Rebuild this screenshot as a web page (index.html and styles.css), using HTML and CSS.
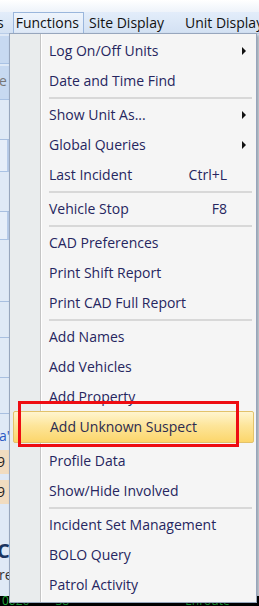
FILE: index.html
```html
<!DOCTYPE html>
<html lang="en">

<head>
    <meta charset="UTF-8" />
    <meta name="viewport" content="width=device-width, initial-scale=1.0" />
    <title>Functions menu</title>
    <link rel="stylesheet" href="styles.css">
</head>

<body>
    <div class="app">
        <div class="title-strip"></div>
        <div class="menubar">
            <span class="menubar-item cut">s</span>
            <span class="menubar-item open">Functions</span>
            <span class="menubar-item site">Site Display</span>
            <span class="menubar-item">Unit Display</span>
        </div>
        <div class="workspace">
            <div class="side">
                <div class="side-box b1"></div>
                <div class="side-box b2">e</div>
                <div class="side-block h40"></div>
                <div class="side-box small"></div>
                <div class="side-block h40"></div>
                <div class="side-box small2"></div>
                <div class="side-block h62"></div>
                <div class="side-block h36"></div>
                <div class="side-block h40"></div>
                <div class="side-block h36"></div>
                <div class="side-row link">a'</div>
                <div class="side-row tan">9</div>
                <div class="side-row tan second">9</div>
                <div class="side-row big">C</div>
                <div class="side-row">re</div>
            </div>
            <div class="status">
                <span>0026</span>
                <span>38</span>
                <span>Enroute</span>
            </div>
        </div>

        <div class="dropdown">
            <div class="gutter"></div>
            <ul class="menu">
                <li>Log On/Off Units<span class="arrow"></span></li>
                <li>Date and Time Find</li>
                <li class="sep"></li>
                <li>Show Unit As...<span class="arrow"></span></li>
                <li>Global Queries<span class="arrow"></span></li>
                <li>Last Incident<span class="key">Ctrl+L</span></li>
                <li class="sep"></li>
                <li>Vehicle Stop<span class="key">F8</span></li>
                <li class="sep"></li>
                <li>CAD Preferences</li>
                <li>Print Shift Report</li>
                <li>Print CAD Full Report</li>
                <li class="sep"></li>
                <li>Add Names</li>
                <li>Add Vehicles</li>
                <li>Add Property</li>
                <li class="hover">Add Unknown Suspect</li>
                <li>Profile Data</li>
                <li>Show/Hide Involved</li>
                <li class="sep"></li>
                <li>Incident Set Management</li>
                <li>BOLO Query</li>
                <li>Patrol Activity</li>
            </ul>
        </div>

        <div class="callout"></div>
    </div>
</body>

</html>
```

FILE: styles.css
```css
* {
    box-sizing: border-box;
}

body {
    margin: 0;
    font-family: "Open Sans", "Noto Sans", sans-serif;
}

.app {
    width: 259px;
    height: 606px;
    position: relative;
    overflow: hidden;
    background: #dfe9f6;
    display: flex;
    flex-direction: column;
}

.title-strip {
    height: 12px;
    background: linear-gradient(#ffffff, #eef3fa);
}

.menubar {
    height: 22px;
    background: linear-gradient(#e3edfa, #d3e1f3);
    border-bottom: 1px solid #b9cde8;
    display: flex;
    align-items: center;
    font-size: 14px;
    color: #111;
    white-space: nowrap;
}

.menubar-item {
    padding: 0 8px 0 6px;
    line-height: 20px;
}

.menubar-item.cut {
    padding: 0 7px 0 0;
    margin-left: -3px;
}

.menubar-item.open {
    margin-left: 2px;
    padding: 0 4px 0 2px;
    height: 22px;
    border: 1px solid #9ab6dc;
    border-bottom: none;
    background: linear-gradient(#eef4fc, #dde8f7);
    line-height: 20px;
}

.menubar-item.site {
    padding: 0 15px 0 5px;
}

.workspace {
    flex: 1;
    display: flex;
    flex-direction: column;
}

.side {
    flex: 1;
    width: 9px;
    display: flex;
    flex-direction: column;
    padding-top: 2px;
    font-size: 14px;
    color: #1c3e7c;
    overflow: hidden;
}

.side > div {
    flex: none;
}

.side-box {
    background: #c7d9f1;
    border-bottom: 1px solid #a9c2e4;
}

.side-box.b1 {
    height: 28px;
    margin-bottom: 2px;
}

.side-box.b2 {
    height: 34px;
    color: #777;
    text-indent: -1px;
    line-height: 30px;
}

.side-box.small {
    height: 32px;
    background: #e6eef9;
    border-right: 2px solid #b7cbe8;
}

.side-box.small2 {
    height: 28px;
    background: #e6eef9;
    border-right: 2px solid #b7cbe8;
}

.side-block {
    border-bottom: 1px solid #a8bfe0;
}

.side-block.h40 {
    height: 40px;
}

.side-block.h62 {
    height: 62px;
}

.side-block.h36 {
    height: 36px;
}

.side-row {
    height: 24px;
    line-height: 24px;
    text-indent: -1px;
}

.side-row.link {
    margin-top: 10px;
    height: 26px;
    color: #2b59c3;
}

.side-row.tan {
    background: #f1dcc0;
    color: #222;
    text-indent: -3px;
}

.side-row.tan.second {
    margin-top: 6px;
}

.side-row.big {
    margin-top: 36px;
    height: 22px;
    line-height: 22px;
    font-size: 20px;
    font-weight: bold;
    color: #1b3560;
    text-indent: -3px;
}

.side-row.big + .side-row {
    margin-top: 2px;
    height: 22px;
    line-height: 22px;
    color: #333;
}

.status {
    height: 10px;
    background: #000;
    color: #1faa3b;
    font-size: 12px;
    line-height: 10px;
    display: flex;
    gap: 26px;
    padding-left: 2px;
    white-space: nowrap;
    overflow: hidden;
}

.status span:last-child {
    margin-left: 90px;
}

.dropdown {
    position: absolute;
    left: 9px;
    top: 33px;
    width: 248px;
    height: 570px;
    background: #f5f5f5;
    border: 1px solid #97a6bd;
    box-shadow: 2px 2px 3px rgba(0, 0, 0, 0.3);
}

.gutter {
    position: absolute;
    left: 0;
    top: 0;
    bottom: 0;
    width: 31px;
    background: #e9eced;
    border-right: 1px solid #c5c5c5;
    box-shadow: 1px 0 0 #fff;
}

.menu {
    position: relative;
    margin: 0;
    padding: 2px 0 0 0;
    list-style: none;
    font-size: 14px;
    color: #262660;
}

.menu li {
    height: 30px;
    line-height: 30px;
    padding-left: 39px;
    padding-right: 29px;
    display: flex;
    align-items: center;
    justify-content: space-between;
    white-space: nowrap;
}

.menu li.sep {
    margin: 1px 4px 0 39px;
    padding: 0;
    border-top: 2px solid #d8d8d8;
    height: 3px;
}

.menu li.hover {
    margin: -1px 2px 3px 3px;
    padding-left: 36px;
    height: 32px;
    background: linear-gradient(#fff5cf, #fde59a 45%, #fcd66b);
    border: 1px solid #e3c26a;
    border-radius: 2px;
    color: #2b2b50;
}

.arrow {
    width: 0;
    height: 0;
    border-top: 4px solid transparent;
    border-bottom: 4px solid transparent;
    border-left: 4px solid #111;
    margin-right: -19px;
}

.key {
    color: #262660;
}

.callout {
    position: absolute;
    left: 18px;
    top: 401px;
    width: 221px;
    height: 46px;
    border: 3px solid #ee0c12;
}
```
